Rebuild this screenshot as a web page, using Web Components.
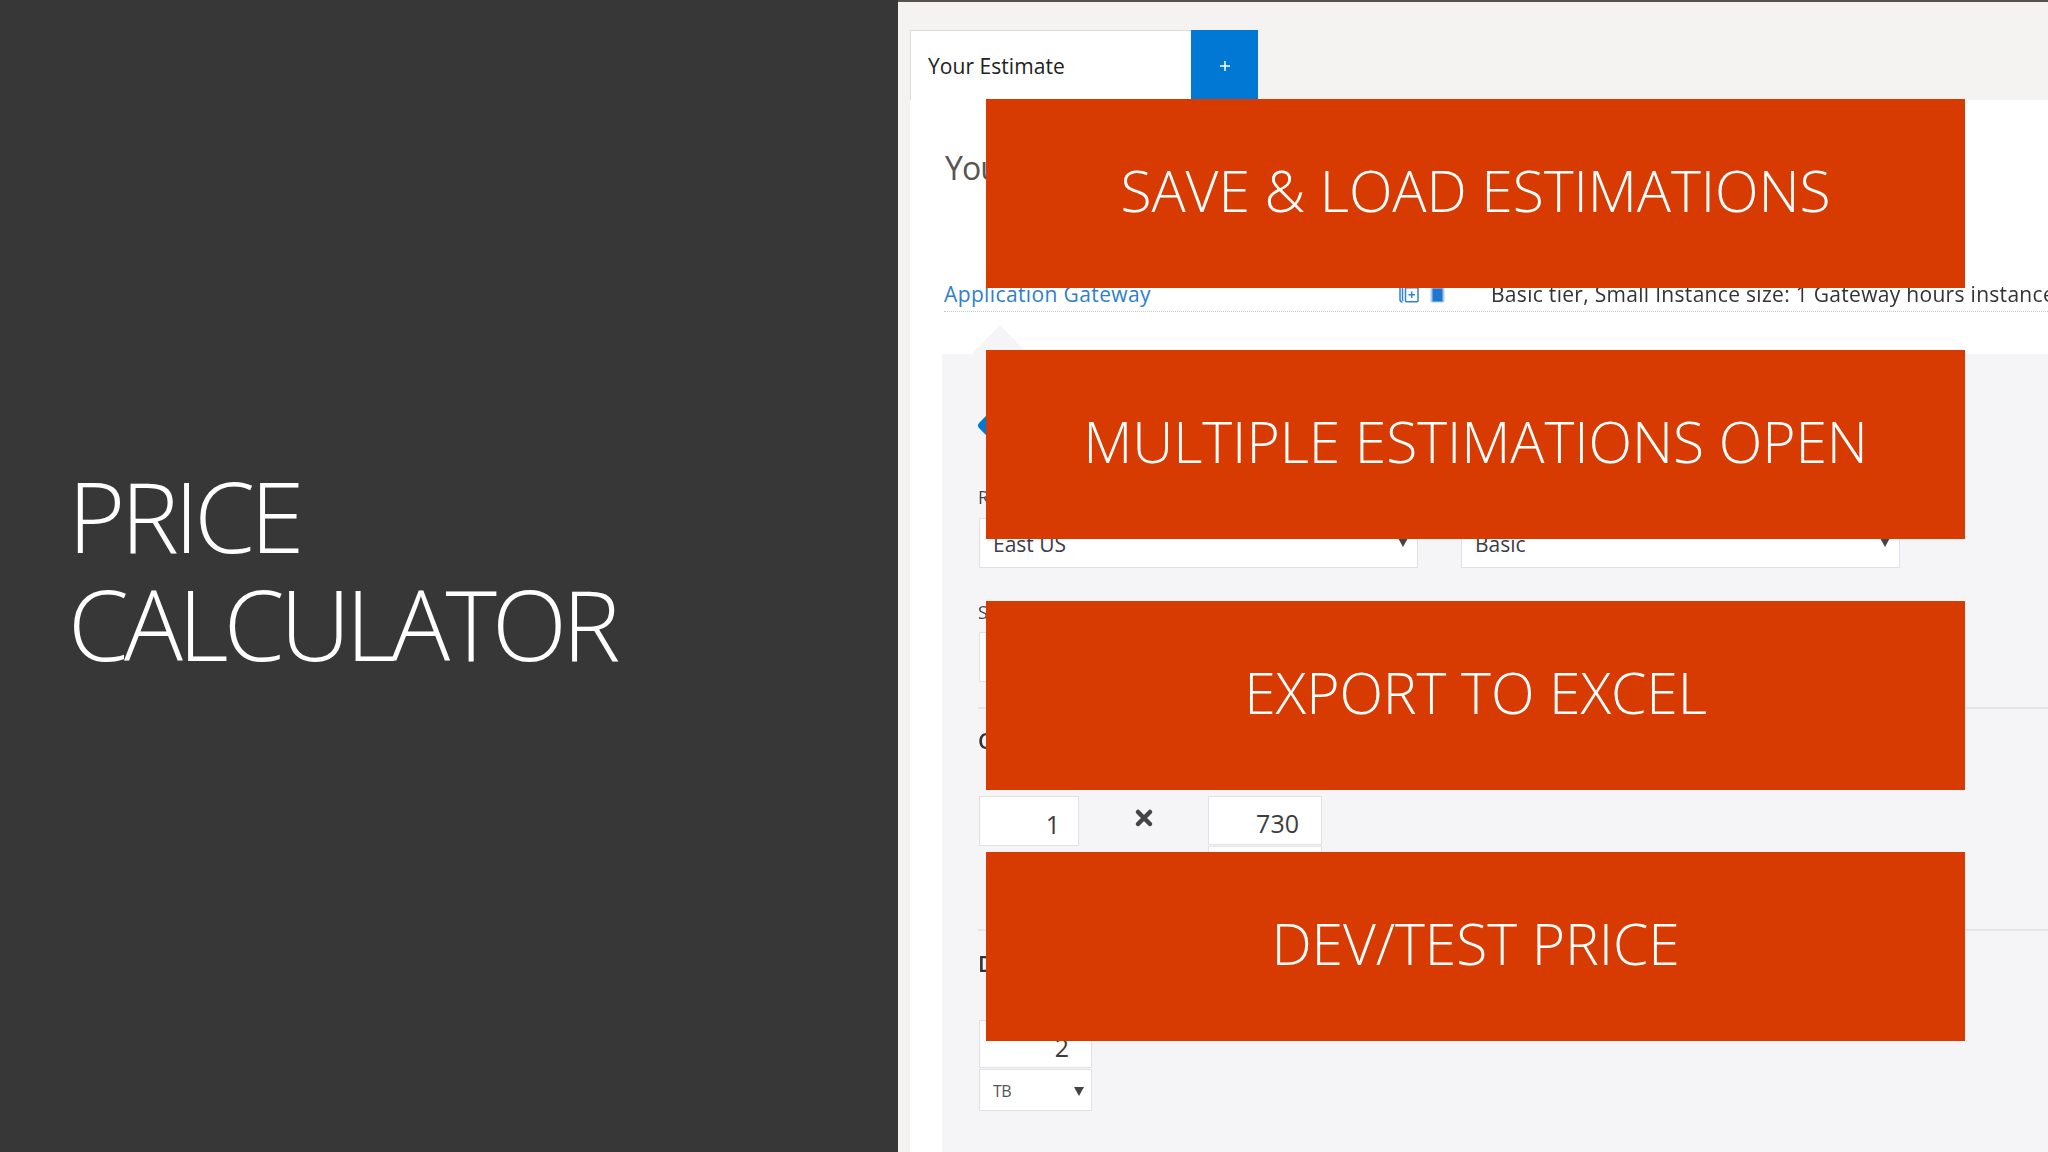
<!DOCTYPE html>
<html lang="en">
<head>
<meta charset="utf-8">
<title>Price Calculator</title>
<style>
    html, body { margin: 0; padding: 0; height: 100%; overflow: hidden; background: #373737; }
    body { font-family: "Open Sans", "Liberation Sans", sans-serif; }
</style>
</head>
<body>
<price-slide>
    <slide-title slot="title">PRICE<br>CALCULATOR</slide-title>
    <estimate-pane slot="pane"></estimate-pane>
    <callout-banner slot="callouts">SAVE &amp; LOAD ESTIMATIONS</callout-banner>
    <callout-banner slot="callouts">MULTIPLE ESTIMATIONS OPEN</callout-banner>
    <callout-banner slot="callouts">EXPORT TO EXCEL</callout-banner>
    <callout-banner slot="callouts">DEV/TEST PRICE</callout-banner>
</price-slide>

<script>
class PriceSlide extends HTMLElement {
    constructor() {
        super();
        this.attachShadow({ mode: 'open' });
        this.shadowRoot.innerHTML = `
            <style>
                :host { display: flex; width: 2048px; height: 1152px; overflow: hidden; background: #373737; }
                .left { flex: 0 0 898px; display: flex; align-items: center; box-sizing: border-box; padding: 0 0 14px 68px; }
                .right { flex: 1; position: relative; min-width: 0; overflow: hidden; }
                /* the orange boxes sit on top of the captured page */
                .callouts {
                    position: absolute; left: 88px; top: 99px; width: 979px;
                    display: flex; flex-direction: column; gap: 62.5px;
                }
            </style>
            <div class="left"><slot name="title"></slot></div>
            <div class="right">
                <slot name="pane"></slot>
                <div class="callouts"><slot name="callouts"></slot></div>
            </div>
        `;
    }
}

class SlideTitle extends HTMLElement {
    constructor() {
        super();
        this.attachShadow({ mode: 'open' });
        this.shadowRoot.innerHTML = `
            <style>
                :host {
                    display: block; color: #fff; font-family: "Open Sans", sans-serif;
                    font-weight: 300; font-size: 98px; line-height: 108px; letter-spacing: -4.7px;
                }
            </style>
            <slot></slot>
        `;
    }
}

class CalloutBanner extends HTMLElement {
    constructor() {
        super();
        this.attachShadow({ mode: 'open' });
        this.shadowRoot.innerHTML = `
            <style>
                :host {
                    display: flex; height: 188.5px; box-sizing: border-box; padding-bottom: 7px;
                    align-items: center; justify-content: center;
                    background: #d83b01; color: #fff; white-space: nowrap;
                    font-family: "Open Sans", sans-serif; font-weight: 300; font-size: 57px; letter-spacing: -.1px;
                }
            </style>
            <slot></slot>
        `;
    }
}

class EstimateTab extends HTMLElement {
    constructor() {
        super();
        this.attachShadow({ mode: 'open' });
        this.shadowRoot.innerHTML = `
            <style>
                :host { display: flex; width: 348px; height: 70px; margin-left: 12px; box-sizing: border-box; }
                .name {
                    flex: 1; background: #fff; border: 1px solid #dcdcdc; border-bottom: 0; border-right: 0;
                    padding: 0 0 0 17px; display: flex; align-items: center;
                    font-size: 21px; letter-spacing: .05px; color: #222;
                }
                button {
                    flex: 0 0 67px; border: 0; padding: 0 0 0 0; background: #0078d4; color: #fff;
                    display: flex; align-items: center; justify-content: center;
                }
            </style>
            <div class="name">Your Estimate</div>
            <button>
                <svg width="12" height="12" viewBox="0 0 12 12" fill="none" stroke="#fff" stroke-width="1.5" style="margin-top:2px"><path d="M6 1v10M1 6h10"/></svg>
            </button>
        `;
    }
}

class EstimateRow extends HTMLElement {
    constructor() {
        super();
        this.attachShadow({ mode: 'open' });
        this.shadowRoot.innerHTML = `
            <style>
                :host {
                    display: flex; align-items: center; height: 32px; box-sizing: border-box; margin-left: 2px;
                    border-bottom: 1px dotted #c8c8c8; white-space: nowrap; font-size: 21px; padding-bottom: 4px;
                }
                a { flex: 0 0 455px; color: #2f7fcb; letter-spacing: .38px; text-decoration: none; }
                .icons { flex: 0 0 92px; display: flex; gap: 11px; align-items: center; margin-top: 3px; }
                .desc { color: #333; letter-spacing: .3px; }
            </style>
            <a>Application Gateway</a>
            <span class="icons">
                <svg width="20" height="16" viewBox="0 0 20 16" fill="none" stroke="#2f84d6" stroke-width="1.5">
                    <path d="M3.500 1v11.500q0 1 1 1"/><path d="M1 1v11.500q0 2.500 2.500 2.500"/>
                    <rect x="6.500" y=".7" width="12.500" height="14" rx="1"/><path d="M12.700 4.500v6.500M9.500 7.700h6.500"/>
                </svg>
                <svg width="15" height="16" viewBox="0 0 15 16">
                    <rect x=".5" y=".5" width="14" height="15" rx="1.500" fill="#a9cdee"/><rect x="2.500" y="1.500" width="10" height="13" fill="#1f76cc"/>
                </svg>
            </span>
            <span class="desc">Basic tier, Small Instance size: 1 Gateway hours instance</span>
        `;
    }
}

class FieldBox extends HTMLElement {
    constructor() {
        super();
        this.attachShadow({ mode: 'open' });
    }
    connectedCallback() {
        const caret = this.hasAttribute('caret');
        const align = this.getAttribute('align') || 'left';
        this.shadowRoot.innerHTML = `
            <style>
                :host {
                    display: flex; align-items: center; box-sizing: border-box; position: relative;
                    background: #fff; border: 1px solid #e1e1e3; color: #3c3c4a;
                    justify-content: ${align === 'right' ? 'flex-end' : 'flex-start'};
                }
                svg { position: absolute; }
            </style>
            <slot></slot>
            ${caret ? `<svg width="10" height="9" viewBox="0 0 10 9" style="right:var(--caret-right,9px);top:var(--caret-top,50%)"><path d="M0 0h10L5 9z" fill="#444"/></svg>` : ''}
        `;
    }
}

class EstimatePane extends HTMLElement {
    constructor() {
        super();
        this.attachShadow({ mode: 'open' });
        this.shadowRoot.innerHTML = `
            <style>
                :host {
                    display: flex; flex-direction: column; height: 1152px; box-sizing: border-box;
                    border-top: 2px solid #55534c; padding-top: 28px; background: #f4f3f2;
                    font-family: "Open Sans", sans-serif; filter: blur(.35px);
                }
                .sheet { flex: 1; background: #fff; margin-left: 12px; padding: 48px 0 0 32px; display: flex; flex-direction: column; min-height: 0; }
                h1 { margin: 0 0 92px 3px; font-weight: 400; font-size: 32px; line-height: 40px; letter-spacing: -1px; color: #555; }
                .notch { width: 56px; height: 29px; margin: 13px 0 0 30px; background: #f5f4f6; clip-path: polygon(50% 0, 100% 100%, 0 100%); flex: none; }
                .config { flex: 1; background: #f5f4f6; padding: 60px 0 0 37px; display: flex; flex-direction: column; min-height: 0; }
                .knob { width: 17px; height: 17px; margin: 3px 0 2px 1px; background: #0078d4; border-radius: 4px; transform: rotate(45deg); flex: none; }
                label { display: block; font-size: 18px; line-height: 24px; color: #444; margin-left: -1px; }
                .region { margin-top: 49px; }
                .pair { display: grid; grid-template-columns: 439px 439px; gap: 43px; margin-top: 9px; }
                .pair field-box { height: 50px; padding: 2px 0 0 13px; font-size: 21px; letter-spacing: 0; --caret-top: 19px; --caret-right: 9px; }
                .size { margin-top: 32px; }
                .wide { display: block; height: 50px; width: 300px; margin-top: 8px; }
                hr { border: 0; height: 2px; background: #e6e6e8; margin: 25px 0 0 -1px; flex: none; }
                .sec { font-size: 22px; line-height: 28px; font-weight: 600; color: #333; margin: 17px 0 0 -1px; }
                .nums { display: flex; align-items: flex-start; margin-top: 42px; }
                .num { height: 50px; padding: 5px 18px 0 0; font-size: 25px; width: 100px; color: #3d3d3d; }
                .times { flex: 0 0 129px; height: 44px; display: flex; align-items: center; justify-content: center; }
                .stack { display: flex; flex-direction: column; gap: 1px; }
                .stack .top { width: 114px; height: 49px; padding-right: 22px; }
                .stack .under { width: 114px; height: 42px; }
                .gap { height: 41px; flex: none; }
                hr.second { margin: 0 0 0 -1px; }
                .disk { margin-top: 18px; }
                .disk-box { display: flex; flex-direction: column; width: 113px; margin-top: 43px; gap: 1px; }
                .disk-box .num { width: 113px; height: 48px; padding: 6px 22px 0 0; }
                .disk-box .unit { height: 42px; padding: 2px 0 0 13px; font-size: 16px; letter-spacing: -.5px; color: #555; --caret-top: 17px; --caret-right: 7px; }
            </style>
            <estimate-tab></estimate-tab>
            <div class="sheet">
                <h1>You</h1>
                <estimate-row></estimate-row>
                <div class="notch"></div>
                <div class="config">
                    <div class="knob"></div>
                    <label class="region">R</label>
                    <div class="pair">
                        <field-box caret>East US</field-box>
                        <field-box caret>Basic</field-box>
                    </div>
                    <label class="size">S</label>
                    <field-box class="wide"></field-box>
                    <hr>
                    <div class="sec">C</div>
                    <div class="nums">
                        <field-box class="num" align="right">1</field-box>
                        <span class="times">
                            <svg width="20" height="20" viewBox="0 0 20 20" stroke="#444" stroke-width="4.500" stroke-linecap="round"><path d="M4 4l12 12M16 4L4 16"/></svg>
                        </span>
                        <div class="stack">
                            <field-box class="num top" align="right">730</field-box>
                            <field-box class="under"></field-box>
                        </div>
                    </div>
                    <div class="gap"></div>
                    <hr class="second">
                    <div class="sec disk">D</div>
                    <div class="disk-box">
                        <field-box class="num" align="right">2</field-box>
                        <field-box class="unit" caret>TB</field-box>
                    </div>
                </div>
            </div>
        `;
    }
}

customElements.define('price-slide', PriceSlide);
customElements.define('slide-title', SlideTitle);
customElements.define('callout-banner', CalloutBanner);
customElements.define('estimate-tab', EstimateTab);
customElements.define('estimate-row', EstimateRow);
customElements.define('field-box', FieldBox);
customElements.define('estimate-pane', EstimatePane);
</script>
</body>
</html>
